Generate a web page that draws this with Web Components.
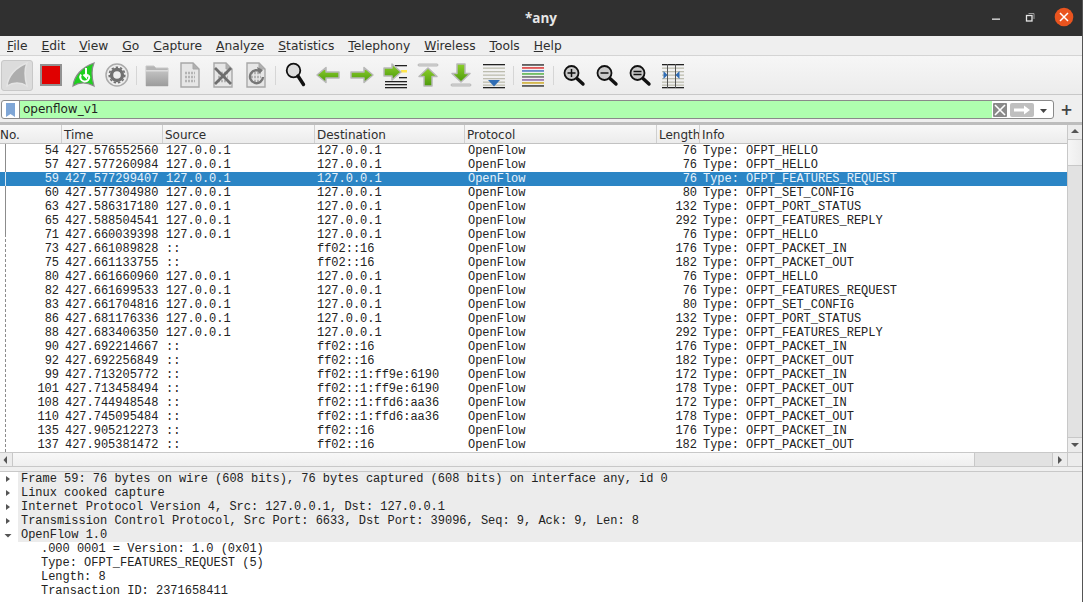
<!DOCTYPE html>
<html>
<head>
<meta charset="utf-8">
<title>*any</title>
<style>
    html, body { margin: 0; padding: 0; height: 100%; overflow: hidden; background: #f0f0f0; }
    body { display: flex; flex-direction: column; box-sizing: border-box; width: 1083px; height: 602px; border-right: 1px solid #555; font-family: "DejaVu Sans", sans-serif; font-size: 12px; color: #222; }
</style>
</head>
<body>
<ws-titlebar>*any</ws-titlebar>
<ws-menubar></ws-menubar>
<ws-toolbar></ws-toolbar>
<ws-filter>openflow_v1</ws-filter>
<ws-packets></ws-packets>
<ws-details></ws-details>

<script>
class WsTitlebar extends HTMLElement {
    constructor() {
        super();
        this.attachShadow({ mode: 'open' });
    }
    connectedCallback() {
        this.shadowRoot.innerHTML = `
            <style>
                :host { display: flex; flex: none; height: 36px; box-sizing: border-box; padding-bottom: 1px; background: #303030; color: #e6e6e6; align-items: center; justify-content: center; position: relative; font: bold 13.5px "Open Sans", "DejaVu Sans", sans-serif; }
                .controls { position: absolute; right: -1px; top: 0; bottom: 0; display: flex; align-items: center; }
                svg { display: block; }
            </style>
            <slot></slot>
            <div class="controls">
                <svg width="123" height="36" viewBox="0 0 123 36">
                    <rect x="32" y="18.500" width="8" height="1.300" fill="#e6e6e6"/>
                    <rect x="66.500" y="15.500" width="5.500" height="5.500" fill="none" stroke="#e6e6e6" stroke-width="1.300"/>
                    <path d="M68.500 13.500h5.500v5.500" fill="none" stroke="#999" stroke-width="1"/>
                    <circle cx="104" cy="17" r="9.300" fill="#e9541f"/>
                    <path d="M100 13l8 8M108 13l-8 8" stroke="#fff" stroke-width="1.500"/>
                </svg>
            </div>
        `;
    }
}

class WsMenubar extends HTMLElement {
    constructor() {
        super();
        this.attachShadow({ mode: 'open' });
    }
    connectedCallback() {
        const items = ['File', 'Edit', 'View', 'Go', 'Capture', 'Analyze', 'Statistics', 'Telephony', 'Wireless', 'Tools', 'Help'];
        const menu = items.map(name => `<span><u>${name[0]}</u>${name.slice(1)}</span>`).join('');
        this.shadowRoot.innerHTML = `
            <style>
                :host { display: flex; flex: none; height: 20px; box-sizing: border-box; padding: 0 0 0 7px; gap: 14px; align-items: center; background: #efefef; border-bottom: 1px solid #d4d4d4; font: 12.25px "DejaVu Sans", sans-serif; color: #2e2e2e; }
                u { text-underline-offset: 1px; }
            </style>
            ${menu}
        `;
    }
}

class WsToolbar extends HTMLElement {
    constructor() {
        super();
        this.attachShadow({ mode: 'open' });
    }
    // document page with tiny 0101 rows, shared by the file icons
    doc(extra) {
        return `<path d="M3 1h12l6 6v18H3z" fill="#e6e6e6" stroke="#a8a8a8" stroke-width="1.400"/><path d="M15 1v6h6z" fill="#b0b0b0" stroke="#a8a8a8"/>
                <path d="M7 11h10M7 15h10M7 19h10" stroke="#b4b4b4" stroke-width="2.400" stroke-dasharray="2 1"/>${extra}`;
    }
    lens(mark) {
        return `<circle cx="9.500" cy="11" r="7" fill="#c9c9c9" stroke="#111" stroke-width="1.800"/>
                <path d="M15 16.500L21 22" stroke="#111" stroke-width="3.400" stroke-linecap="round"/>${mark}`;
    }
    icon(body, w = 24) {
        return `<svg width="${w}" height="26" viewBox="0 0 ${w} 26">${body}</svg>`;
    }
    connectedCallback() {
        const lines = (ys, color) => ys.map(y => `<rect x="1" y="${y}" width="22" height="1.300" fill="${color}"/>`).join('');
        const outline = 'stroke="#b8b8b8" stroke-width="1.500" stroke-linejoin="round"';
        const start = [
            `<b class="active">${this.icon('<path d="M1 24C2 14 10 5 21 1 18 8 19 17 21 24 15 20 7 20 1 24z" fill="#adadad" stroke="#e4e4e4" stroke-width="1.500"/>')}</b>`,
            `<b>${this.icon('<rect x="2" y="3" width="20" height="20" fill="#e00000" stroke="#929292" stroke-width="2"/>')}</b>`,
            `<b>${this.icon('<path d="M1 24C2 14 10 5 22 1 19 8 20 17 22 24 15 20 7 20 1 24z" fill="#1fd01f" stroke="#8a8a8a" stroke-width="1.200"/><path d="M9 12.500a4.500 4.500 0 1 0 8 1" fill="none" stroke="#fff" stroke-width="2"/><path d="M14 6v9l-2.500-2.500M14 15l2.500-2.500" fill="none" stroke="#fff" stroke-width="2"/>')}</b>`,
            `<b>${this.icon('<circle cx="12" cy="13" r="11" fill="#eee" stroke="#aaa" stroke-width="1.500"/><circle cx="12" cy="13" r="5.500" fill="none" stroke="#707070" stroke-width="3.400"/><circle cx="12" cy="13" r="7.800" fill="none" stroke="#707070" stroke-width="1.600" stroke-dasharray="2.400 2"/>')}</b>`
        ];
        const files = [
            `<b>${this.icon('<path d="M1 4h8l2 2h12v18H1z" fill="#b5b5b5" stroke="#c8c8c8"/><rect x="1" y="8" width="22" height="16" fill="url(#folder)"/><rect x="1" y="8" width="22" height="1.500" fill="#dcdcdc"/>')}</b>`,
            `<b>${this.icon(this.doc(''))}</b>`,
            `<b>${this.icon(this.doc('<path d="M4 6l16 16M20 6L4 22" stroke="#6e6e6e" stroke-width="2.800"/>'))}</b>`,
            `<b>${this.icon(this.doc('<path d="M17 10a6.500 6.500 0 1 0 2 5" fill="none" stroke="#777" stroke-width="2.400"/><path d="M13 5l6 3-4 4z" fill="#777"/>'))}</b>`
        ];
        const nav = [
            `<b>${this.icon('<circle cx="9.500" cy="8.500" r="6.800" fill="#dcdcdc" stroke="#111" stroke-width="1.800"/><path d="M14 14l5.500 8.500" stroke="#111" stroke-width="3.400" stroke-linecap="round"/>')}</b>`,
            `<b>${this.icon(`<path d="M0 13l9-7.500v4.500h13v6H9v4.500z" fill="url(#arrow)" ${outline}/>`)}</b>`,
            `<b>${this.icon(`<path d="M23 13l-9-7.500v4.500H1v6h13v4.500z" fill="url(#arrow)" ${outline}/>`)}</b>`,
            `<b>${this.icon(`<rect x="2" y="19" width="22" height="1.300" fill="#222"/><rect x="2" y="22" width="22" height="1.300" fill="#222"/><rect x="2" y="25" width="22" height="1.300" fill="#222"/><rect x="12" y="3" width="12" height="1.300" fill="#222"/><rect x="16" y="15" width="8" height="1.300" fill="#222"/><rect x="18" y="8" width="6" height="2.500" fill="#ffe64d"/><path d="M18 10L9 2v4H1v8h8v4z" fill="url(#arrow)" ${outline}/>`)}</b>`,
            `<b>${this.icon(`<rect x="2" y="2" width="20" height="2" rx="1" fill="#ddd" stroke="#aaa" stroke-width=".8"/><path d="M12 6l9 8.500h-5V24H8v-9.500H3z" fill="url(#arrow)" ${outline}/>`)}</b>`,
            `<b>${this.icon(`<rect x="2" y="22" width="20" height="2" rx="1" fill="#ddd" stroke="#aaa" stroke-width=".8"/><path d="M12 20l9-8.500h-5V2H8v9.500H3z" fill="url(#arrow)" ${outline}/>`)}</b>`,
            `<b>${this.icon(`${lines([2, 25], '#222')}${lines([5.500, 9, 12.500, 16, 19.500, 22.500], '#bdbdaf')}<path d="M6 18h12l-6 6.500z" fill="#2f6db5"/>`)}</b>`
        ];
        const colors = [`<b class="colors">${this.icon(`${lines([2.300, 23.300], '#222')}${lines([5.300], '#d81818')}${lines([8.300], '#2b5fb8')}${lines([11.300], '#3ca82c')}${lines([14.300], '#555')}${lines([17.300], '#7a4b96')}${lines([20.300], '#c9a00a')}`)}</b>`];
        const zoom = [
            `<b>${this.icon(this.lens('<path d="M5.500 11h8M9.500 7v8" stroke="#111" stroke-width="1.500"/>'))}</b>`,
            `<b>${this.icon(this.lens('<path d="M5.500 11h8" stroke="#111" stroke-width="1.500"/>'))}</b>`,
            `<b>${this.icon(this.lens('<path d="M5.500 9.500h8M5.500 12.500h8" stroke="#111" stroke-width="1.500"/>'))}</b>`,
            `<b>${this.icon(`${lines([2, 25], '#222')}${lines([5.500, 9, 12.500, 16, 19.500, 22.500], '#bdbdaf')}<path d="M6.500 2v24M14.500 2v24" stroke="#555" stroke-width="1"/><path d="M2.500 9l4 4-4 4zM18.500 9l-4 4 4 4z" fill="#2f6db5"/>`)}</b>`
        ];
        const sep = '<i></i>';
        this.shadowRoot.innerHTML = `
            <style>
                :host { display: flex; flex: none; height: 39px; box-sizing: border-box; padding: 0 0 0 1px; align-items: center; background: linear-gradient(#f6f6f6, #ececec); border-bottom: 1px solid #c8c8c8; }
                b { display: flex; flex: none; width: 33px; height: 31px; align-items: center; justify-content: center; box-sizing: border-box; }
                b.active { background: #dcdcdc; border: 1px solid #c8c8c8; border-radius: 3px; width: 32px; margin-right: 1px; padding-left: 2px; }
                b.colors svg { margin-left: -2px; }
                i { flex: none; width: 1px; height: 19px; background: #d6d6d6; margin: 0 3px; }
                svg { display: block; overflow: visible; }
                .defs { position: absolute; width: 0; height: 0; }
            </style>
            <svg class="defs"><defs>
                <linearGradient id="arrow" x1="0" y1="0" x2="0" y2="1"><stop offset="0" stop-color="#8ccf2a"/><stop offset="1" stop-color="#4d9a0c"/></linearGradient>
                <linearGradient id="folder" x1="0" y1="0" x2="0" y2="1"><stop offset="0" stop-color="#c4c4c4"/><stop offset="1" stop-color="#9c9c9c"/></linearGradient>
            </defs></svg>
            ${start.join('')}${sep}${files.join('')}${sep}${nav.join('')}${sep}${colors.join('')}${sep}${zoom.join('')}
        `;
    }
}

class WsFilter extends HTMLElement {
    constructor() {
        super();
        this.attachShadow({ mode: 'open' });
    }
    connectedCallback() {
        this.shadowRoot.innerHTML = `
            <style>
                :host { display: flex; flex: none; height: 30px; box-sizing: border-box; padding: 5px 11px 3px 1px; align-items: stretch; gap: 8px; background: #efefef; border-bottom: 3px solid #bdbdbd; color: #222; }
                .box { flex: 1; display: flex; align-items: stretch; border: 1px solid #8a8a8a; border-radius: 3px; background: #fff; }
                .mark { flex: none; width: 17px; display: flex; align-items: center; justify-content: center; border-right: 1px solid #8a8a8a; }
                .text { flex: 1; background: #afffaf; padding-left: 3px; font: 12px/17px "DejaVu Sans", sans-serif; }
                .btns { flex: none; display: flex; align-items: center; width: 60px; padding-left: 1px; gap: 3px; }
                .plus { flex: none; font: bold 15px/18px "DejaVu Sans", sans-serif; color: #444; width: 9px; display: flex; align-items: center; justify-content: center; }
                svg { display: block; }
            </style>
            <div class="box">
                <div class="mark"><svg width="9" height="14" viewBox="0 0 9 14"><path d="M0 0h9v14L4.500 11 0 14z" fill="#7fa6d6"/></svg></div>
                <div class="text"><slot></slot></div>
                <div class="btns">
                    <svg width="14" height="14" viewBox="0 0 14 14"><rect width="14" height="14" rx="1" fill="#8a8a8a"/><path d="M2 2l10 10M12 2L2 12" stroke="#fff" stroke-width="1.600"/></svg>
                    <svg width="24" height="14" viewBox="0 0 24 14"><rect width="24" height="14" rx="2" fill="#bfbfbf"/><path d="M4 5.500h10V2.500L20 7l-6 4.500v-3H4z" fill="#fff"/></svg>
                    <svg width="14" height="14" viewBox="0 0 14 14"><path d="M3 6h7L6.500 10z" fill="#444"/></svg>
                </div>
            </div>
            <div class="plus">+</div>
        `;
    }
}

class WsScrollbar extends HTMLElement {
    constructor() {
        super();
        this.attachShadow({ mode: 'open' });
    }
    connectedCallback() {
        const vertical = this.hasAttribute('vertical');
        const a = vertical
            ? '<svg width="14" height="14" viewBox="0 0 14 14"><path d="M3 8l4-4 4 4z" fill="#555"/></svg>'
            : '<svg width="12" height="14" viewBox="0 0 12 14"><path d="M7 3L3.500 7 7 11z" fill="#555"/></svg>';
        const b = vertical
            ? '<svg width="14" height="14" viewBox="0 0 14 14"><path d="M3 5l4 4 4-4z" fill="#555"/></svg>'
            : '<svg width="14" height="14" viewBox="0 0 14 14"><path d="M5 3l4 4-4 4z" fill="#555"/></svg>';
        this.shadowRoot.innerHTML = `
            <style>
                :host { display: flex; flex: none; background: #ececec; box-sizing: border-box; }
                :host([vertical]) { flex-direction: column; width: 15px; border-left: 1px solid #c8c8c8; }
                :host(:not([vertical])) { flex: 1; min-width: 0; }
                svg { display: block; flex: none; }
                .trough { flex: 1; display: flex; min-width: 0; }
                :host([vertical]) .trough { flex-direction: column; }
                .thumb { flex: none; box-sizing: border-box; }
                .rest { flex: 1; background: #e2e2e2; }
                :host([vertical]) .thumb { height: 27px; background: linear-gradient(to right, #f6f6f6, #ececec); border-top: 1px solid #c8c8c8; border-bottom: 1px solid #c8c8c8; }
                :host(:not([vertical])) .thumb { width: 963px; background: linear-gradient(#f8f8f8, #efefef); border-left: 1px solid #c8c8c8; border-right: 1px solid #c8c8c8; }
                :host(:not([vertical])) .end { border-left: 1px solid #c8c8c8; display: flex; }
                :host([vertical]) .end { border-top: 1px solid #c8c8c8; }
            </style>
            ${a}
            <div class="trough"><div class="thumb"></div><div class="rest"></div></div>
            <div class="end">${b}</div>
        `;
    }
}

class WsPackets extends HTMLElement {
    constructor() {
        super();
        this.attachShadow({ mode: 'open' });
    }
    connectedCallback() {
        const loop = '127.0.0.1';
        const rows = [
            [54, '427.576552560', loop, loop, 76, 'Type: OFPT_HELLO'],
            [57, '427.577260984', loop, loop, 76, 'Type: OFPT_HELLO'],
            [59, '427.577299407', loop, loop, 76, 'Type: OFPT_FEATURES_REQUEST'],
            [60, '427.577304980', loop, loop, 80, 'Type: OFPT_SET_CONFIG'],
            [63, '427.586317180', loop, loop, 132, 'Type: OFPT_PORT_STATUS'],
            [65, '427.588504541', loop, loop, 292, 'Type: OFPT_FEATURES_REPLY'],
            [71, '427.660039398', loop, loop, 76, 'Type: OFPT_HELLO'],
            [73, '427.661089828', '::', 'ff02::16', 176, 'Type: OFPT_PACKET_IN'],
            [75, '427.661133755', '::', 'ff02::16', 182, 'Type: OFPT_PACKET_OUT'],
            [80, '427.661660960', loop, loop, 76, 'Type: OFPT_HELLO'],
            [82, '427.661699533', loop, loop, 76, 'Type: OFPT_FEATURES_REQUEST'],
            [83, '427.661704816', loop, loop, 80, 'Type: OFPT_SET_CONFIG'],
            [86, '427.681176336', loop, loop, 132, 'Type: OFPT_PORT_STATUS'],
            [88, '427.683406350', loop, loop, 292, 'Type: OFPT_FEATURES_REPLY'],
            [90, '427.692214667', '::', 'ff02::16', 176, 'Type: OFPT_PACKET_IN'],
            [92, '427.692256849', '::', 'ff02::16', 182, 'Type: OFPT_PACKET_OUT'],
            [99, '427.713205772', '::', 'ff02::1:ff9e:6190', 172, 'Type: OFPT_PACKET_IN'],
            [101, '427.713458494', '::', 'ff02::1:ff9e:6190', 178, 'Type: OFPT_PACKET_OUT'],
            [108, '427.744948548', '::', 'ff02::1:ffd6:aa36', 172, 'Type: OFPT_PACKET_IN'],
            [110, '427.745095484', '::', 'ff02::1:ffd6:aa36', 178, 'Type: OFPT_PACKET_OUT'],
            [135, '427.905212273', '::', 'ff02::16', 176, 'Type: OFPT_PACKET_IN'],
            [137, '427.905381472', '::', 'ff02::16', 182, 'Type: OFPT_PACKET_OUT']
        ];
        const body = rows.map(r => `
            <div class="row${r[0] === 59 ? ' sel' : ''}">
                <span class="r">${r[0]}</span><span>${r[1]}</span><span>${r[2]}</span><span>${r[3]}</span><span>OpenFlow</span><span class="r">${r[4]}</span><span>${r[5]}</span>
            </div>`).join('');
        const heads = ['No.', 'Time', 'Source', 'Destination', 'Protocol', 'Length', 'Info'].map(h => `<span>${h}</span>`).join('');
        this.shadowRoot.innerHTML = `
            <style>
                :host { display: flex; flex-direction: column; flex: none; height: 347px; background: #fff; }
                .main { display: flex; flex: 1; min-height: 0; }
                .table { flex: 1; min-width: 0; display: flex; flex-direction: column; }
                .head, .row { display: grid; grid-template-columns: 62px 101px 152px 150px 192px 43px 1fr; }
                .head { flex: none; height: 19px; box-sizing: border-box; border-bottom: 1px solid #c2c2c2; background: linear-gradient(#f8f8f8, #ececec); font: 12px/16px "DejaVu Sans", sans-serif; color: #2e2e2e; }
                .head span { padding: 2px 0 0 2px; border-right: 1px solid #cfcfcf; overflow: hidden; white-space: nowrap; }
                .head span:first-child { padding-left: 0; }
                .head span:last-child { border-right: 0; }
                .rows { flex: 1; position: relative; overflow: hidden; }
                .row { height: 14px; font: 12px/14px "Liberation Mono", monospace; letter-spacing: -0.015px; color: #222; white-space: pre; }
                .row span { padding-left: 3px; overflow: hidden; }
                .row span:nth-child(4) { padding-left: 2px; }
                .row span.r { text-align: right; padding: 0 3px 0 0; }
                .row.sel { background: #2b85c5; color: #e8f2fa; }
                .thread { position: absolute; left: 5px; top: 0; width: 1px; bottom: 0; background: repeating-linear-gradient(#8c8c8c 0 3px, transparent 3px 5px); }
                .thread::before { content: ""; position: absolute; left: 0; top: 0; width: 1px; height: 90px; background: linear-gradient(#8c8c8c 0 28px, #d5e6f3 28px 42px, #8c8c8c 42px); }
                .hbar { display: flex; flex: none; height: 15px; box-sizing: border-box; border-top: 1px solid #c8c8c8; border-bottom: 1px solid #c8c8c8; background: #ececec; }
                .corner { flex: none; width: 15px; box-sizing: border-box; border-left: 1px solid #c8c8c8; }
                .bottom { height: 5px; flex: none; box-sizing: border-box; background: #efefef; border-bottom: 1px solid #c8c8c8; }
            </style>
            <div class="main">
                <div class="table">
                    <div class="head">${heads}</div>
                    <div class="rows">${body}<div class="thread"></div></div>
                </div>
                <ws-scrollbar vertical></ws-scrollbar>
            </div>
            <div class="hbar"><ws-scrollbar></ws-scrollbar><div class="corner"></div></div>
            <div class="bottom"></div>
        `;
    }
}

class WsDetails extends HTMLElement {
    constructor() {
        super();
        this.attachShadow({ mode: 'open' });
    }
    connectedCallback() {
        const closed = '<svg width="14" height="14" viewBox="0 0 14 14"><path d="M6 4l4 3-4 3z" fill="#555"/></svg>';
        const open = '<svg width="14" height="14" viewBox="0 0 14 14"><path d="M4.500 6h7L8 9.500z" fill="#555"/></svg>';
        const tops = [
            ['Frame 59: 76 bytes on wire (608 bits), 76 bytes captured (608 bits) on interface any, id 0', closed],
            ['Linux cooked capture', closed],
            ['Internet Protocol Version 4, Src: 127.0.0.1, Dst: 127.0.0.1', closed],
            ['Transmission Control Protocol, Src Port: 6633, Dst Port: 39096, Seq: 9, Ack: 9, Len: 8', closed],
            ['OpenFlow 1.0', open]
        ].map(t => `<div class="top"><span class="tw">${t[1]}</span><span class="label">${t[0]}</span></div>`).join('');
        const subs = ['.000 0001 = Version: 1.0 (0x01)', 'Type: OFPT_FEATURES_REQUEST (5)', 'Length: 8', 'Transaction ID: 2371658411']
            .map(t => `<div class="sub">${t}</div>`).join('');
        this.shadowRoot.innerHTML = `
            <style>
                :host { display: block; flex: 1; min-height: 0; background: #fff; font: 12px/14px "Liberation Mono", monospace; letter-spacing: -0.015px; color: #222; overflow: hidden; }
                .top { display: flex; height: 14px; white-space: pre; }
                .tw { width: 18px; flex: none; display: flex; align-items: center; background: #fff; }
                .label { flex: 1; padding-left: 3px; background: #ececec; }
                .top svg { display: block; }
                .sub { height: 14px; padding-left: 41px; white-space: pre; }
            </style>
            ${tops}${subs}
        `;
    }
}

customElements.define('ws-titlebar', WsTitlebar);
customElements.define('ws-menubar', WsMenubar);
customElements.define('ws-toolbar', WsToolbar);
customElements.define('ws-filter', WsFilter);
customElements.define('ws-scrollbar', WsScrollbar);
customElements.define('ws-packets', WsPackets);
customElements.define('ws-details', WsDetails);
</script>
</body>
</html>
